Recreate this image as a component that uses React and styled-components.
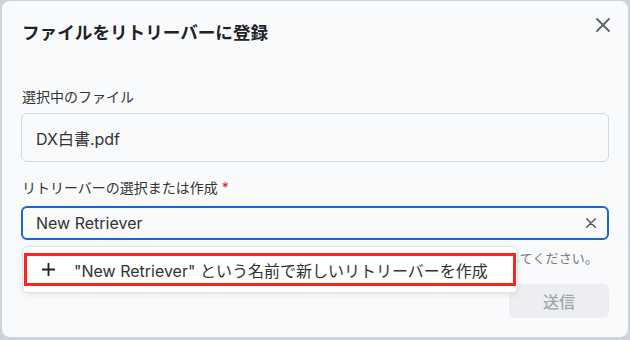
import React from "react";
import styled, { createGlobalStyle } from "styled-components";

const GlobalStyle = createGlobalStyle`
  html, body {
    margin: 0;
    padding: 0;
    background: #cfd3d9;
  }
  body {
    font-family: "Inter", "Noto Sans CJK JP", sans-serif;
  }
`;

const Backdrop = styled.div`
  width: 630px;
  height: 340px;
  padding: 1px 2px 3px 2px;
  box-sizing: border-box;
  background: #cfd3d9;
`;

const Dialog = styled.div`
  position: relative;
  height: 100%;
  box-sizing: border-box;
  background: #f9fafc;
  border-radius: 8px;
  padding: 19px 19px 0 19px;
  display: flex;
  flex-direction: column;
`;

const Header = styled.div`
  display: flex;
  align-items: center;
  justify-content: space-between;
  height: 26px;
`;

const Title = styled.h2`
  margin: 0 0 0 1px;
  font-size: 17.6px;
  line-height: 26px;
  font-weight: 700;
  color: #1f2328;
`;

const CloseButton = styled.button`
  align-self: flex-start;
  border: none;
  background: none;
  padding: 0;
  margin: -2px -1px 0 0;
  width: 14px;
  height: 14px;
  display: flex;
  color: #5f6368;
  cursor: pointer;
`;

const Field = styled.div`
  display: flex;
  flex-direction: column;
  margin-top: ${(p) => p.$top}px;
  position: relative;
`;

const Label = styled.label`
  font-size: 14px;
  line-height: 20px;
  color: #333;
  margin: 0 0 ${(p) => p.$gap}px 1px;
`;

const Required = styled.span`
  color: #e02020;
  margin-left: 4px;
`;

const Input = styled.div`
  height: ${(p) => p.$h}px;
  box-sizing: border-box;
  border: ${(p) => (p.$focus ? "2px solid #1769cc" : "1px solid #d3d8df")};
  border-radius: 6px;
  background: #f9fafc;
  display: flex;
  align-items: center;
  padding: 0 ${(p) => (p.$focus ? 11 : 14)}px 0 ${(p) => (p.$focus ? 13 : 14)}px;
  font-size: 16px;
  color: #333;
`;

const InputText = styled.span`
  flex: 1;
`;

const ClearIcon = styled.span`
  display: flex;
  color: #555;
`;

const Helper = styled.div`
  margin: 8px 0 0 1px;
  font-size: 13px;
  letter-spacing: 0.13px;
  line-height: 20px;
  color: #777;
  white-space: nowrap;
`;

const Menu = styled.div`
  position: absolute;
  left: 1px;
  top: 68px;
  width: 496px;
  height: 47px;
  box-sizing: border-box;
  background: #fff;
  border: 1px solid #dfe2e7;
  border-radius: 6px;
  box-shadow: 0 2px 6px rgba(0, 0, 0, 0.08);
  padding: 6px 1px 0 1px;
  z-index: 2;
`;

const MenuOption = styled.div`
  height: 33px;
  box-sizing: border-box;
  border: 3px solid #ff2222;
  display: flex;
  align-items: center;
  padding-left: 14px;
  font-size: 16px;
  color: #333;
`;

const PlusIcon = styled.span`
  display: flex;
  width: 15px;
  margin-right: 18px;
  color: #222;
`;

const Footer = styled.div`
  display: flex;
  justify-content: flex-end;
  margin-top: 16px;
`;

const SubmitButton = styled.button`
  width: 100px;
  height: 34px;
  border: none;
  border-radius: 6px;
  background: #eceef2;
  color: #a2a6ad;
  font-family: "Inter", "Noto Sans CJK JP", sans-serif;
  font-size: 16px;
  font-weight: 500;
`;

const XIcon = ({ size, stroke }) => (
  <svg width={size} height={size} viewBox="0 0 14 14" fill="none">
    <path d="M1 1L13 13M13 1L1 13" stroke="currentColor" strokeWidth={stroke} strokeLinecap="round" />
  </svg>
);

export default function App() {
  return (
    <>
      <GlobalStyle />
      <Backdrop>
        <Dialog>
          <Header>
            <Title>ファイルをリトリーバーに登録</Title>
            <CloseButton aria-label="閉じる">
              <XIcon size={14} stroke={1.8} />
            </CloseButton>
          </Header>

          <Field $top={41}>
            <Label $gap={6}>選択中のファイル</Label>
            <Input $h={49}>
              <InputText>DX白書.pdf</InputText>
            </Input>
          </Field>

          <Field $top={16}>
            <Label $gap={8}>
              リトリーバーの選択または作成<Required>*</Required>
            </Label>
            <Input $h={34} $focus>
              <InputText>New Retriever</InputText>
              <ClearIcon>
                <XIcon size={10} stroke={2} />
              </ClearIcon>
            </Input>
            <Helper>
              一覧から既存のリトリーバーを選択するか、新しいリトリーバー名を入力して作成してください。
            </Helper>
            <Menu>
              <MenuOption>
                <PlusIcon>
                  <svg width="15" height="15" viewBox="0 0 15 15" fill="none">
                    <path d="M7.5 1V14M1 7.5H14" stroke="currentColor" strokeWidth="1.8" />
                  </svg>
                </PlusIcon>
                "New Retriever" という名前で新しいリトリーバーを作成
              </MenuOption>
            </Menu>
          </Field>

          <Footer>
            <SubmitButton disabled>送信</SubmitButton>
          </Footer>
        </Dialog>
      </Backdrop>
    </>
  );
}
